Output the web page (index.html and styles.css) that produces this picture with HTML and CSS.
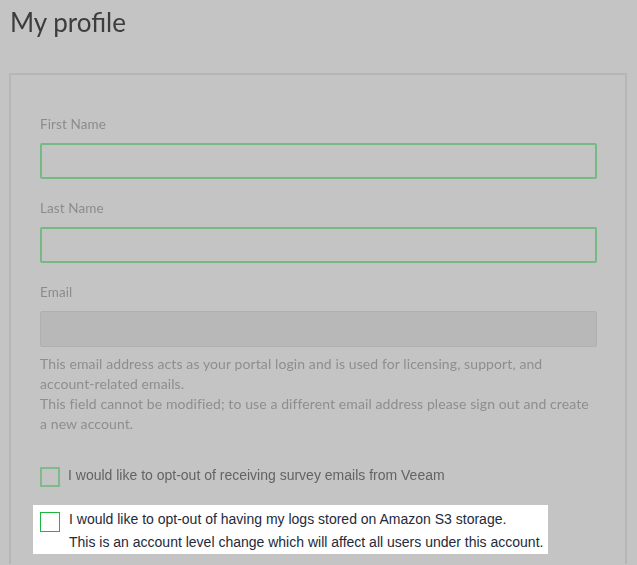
FILE: index.html
```html
<!DOCTYPE html>
<html lang="en">
<head>
<meta charset="utf-8">
<title>My profile</title>
<link rel="stylesheet" href="styles.css">
</head>
<body>
<div class="page">
  <h1 class="title soft">My profile</h1>
  <div class="card">
    <div class="field soft">
      <label class="label">First Name</label>
      <div class="input"></div>
    </div>
    <div class="field soft">
      <label class="label">Last Name</label>
      <div class="input"></div>
    </div>
    <div class="field soft">
      <label class="label">Email</label>
      <div class="input input-disabled"></div>
      <p class="help">This email address acts as your portal login and is used for licensing, support, and account-related emails.<br>This field cannot be modified; to use a different email address please sign out and create a new account.</p>
    </div>
    <div class="check-row soft">
      <span class="box box-dim"></span>
      <span class="check-text">I would like to opt-out of receiving survey emails from Veeam</span>
    </div>
    <div class="spotlight">
      <span class="box"></span>
      <div class="spot-text">
        <div class="spot-line">I would like to opt-out of having my logs stored on Amazon S3 storage.</div>
        <div class="spot-line">This is an account level change which will affect all users under this account.</div>
      </div>
    </div>
  </div>
</div>
</body>
</html>
```

FILE: styles.css
```css
html, body {
  margin: 0;
  padding: 0;
  background: #c4c4c4;
  height: 100%;
  overflow: hidden;
}

.page {
  padding: 0 10px 0 9px;
  font-family: Lato, "Liberation Sans", sans-serif;
}

.soft {
  filter: blur(0.7px);
}

.title {
  margin: 0;
  padding: 5px 0 0 1px;
  height: 73px;
  box-sizing: border-box;
  font-family: Lato, "Open Sans", sans-serif;
  font-weight: 400;
  font-size: 26px;
  line-height: 34px;
  color: #3d3d3d;
}

.card {
  border: 2px solid #b6b6b6;
  border-bottom: none;
  padding: 39px 28px 10px 29px;
  display: flex;
  flex-direction: column;
}

.field {
  display: flex;
  flex-direction: column;
  margin-bottom: 19px;
}

.label {
  font-size: 13.5px;
  line-height: 20px;
  color: #8c8c8c;
  margin-bottom: 9px;
  letter-spacing: 0.1px;
}

.input {
  height: 36px;
  box-sizing: border-box;
  border: 2px solid #76b985;
  border-radius: 2px;
}

.input-disabled {
  background: #b8b8b8;
  border: 1px solid #b0b0b0;
}

.help {
  margin: 7px 0 0;
  font-size: 14px;
  line-height: 20px;
  color: #8e8e8e;
  letter-spacing: 0.1px;
}

.check-row {
  display: flex;
  align-items: flex-start;
  gap: 8px;
  margin-top: 14px;
  margin-bottom: 18px;
}

.box {
  width: 20px;
  height: 20px;
  box-sizing: border-box;
  border: 1.5px solid #1db63f;
  flex: none;
}

.box-dim {
  border: 2px solid #7dbb8a;
}

.check-text {
  font-family: "Liberation Sans", Arial, sans-serif;
  font-size: 14px;
  line-height: 16px;
  color: #636363;
}

.spotlight {
  align-self: flex-start;
  display: flex;
  align-items: flex-start;
  gap: 9px;
  background: #ffffff;
  margin-left: -7px;
  padding: 7px 5px 0 7px;
}

.spot-text {
  font-family: "Liberation Sans", Arial, sans-serif;
  font-size: 14px;
  color: #232a3a;
}

.spot-line {
  line-height: 23px;
  margin-top: -4px;
}

.spot-line + .spot-line {
  margin-top: 0;
}
```
